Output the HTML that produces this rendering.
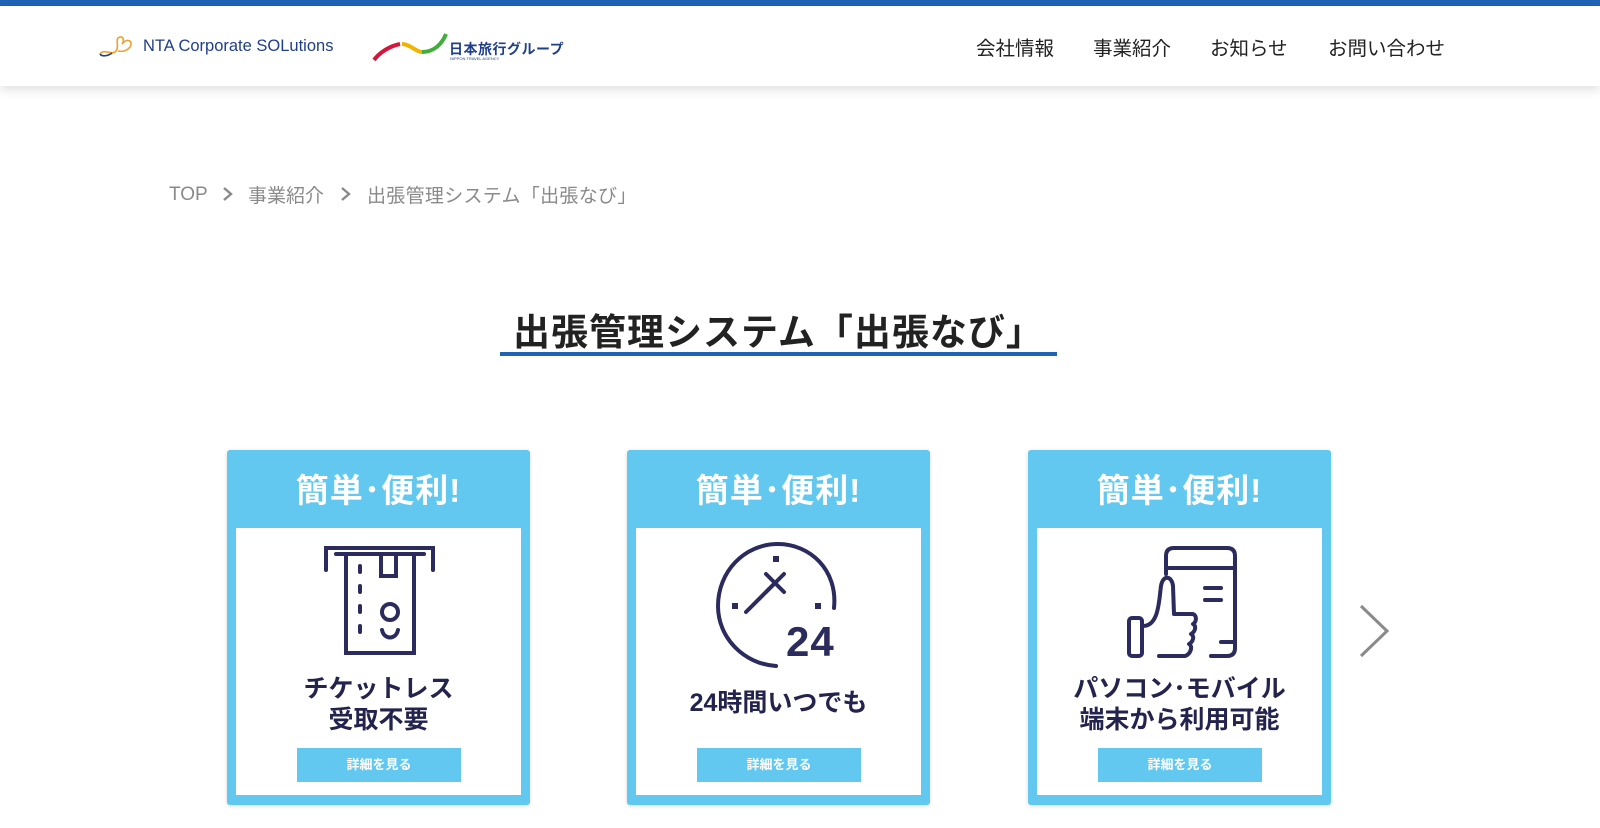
<!DOCTYPE html>
<html><head><meta charset="utf-8">
<style>
*{margin:0;padding:0;box-sizing:border-box}
body{width:1600px;height:828px;overflow:hidden;background:#fff;font-family:"Liberation Sans","Noto Sans CJK JP",sans-serif;position:relative}
.topbar{position:absolute;left:0;top:0;width:1600px;height:6px;background:#1f63b5}
.header{position:absolute;left:0;top:6px;width:1600px;height:80px;background:#fff;box-shadow:0 4px 10px rgba(0,0,0,0.12)}
.nav{position:absolute;top:26px;font-size:19.5px;color:#222;white-space:nowrap}
.bc{position:absolute;top:184px;height:26px;line-height:26px;font-size:19px;color:#8a8a8a;white-space:nowrap}
.title{position:absolute;left:480px;top:302px;width:597px;text-align:center;font-size:37px;font-weight:bold;color:#222;letter-spacing:1px}
.uline{position:absolute;left:500px;top:352px;width:557px;height:4px;background:#1f63b5}
.card{position:absolute;top:450px;width:303px;height:355px;background:#62c8ef;border-radius:3px;box-shadow:0 1px 4px rgba(0,0,0,0.15)}
.card .hd{position:absolute;left:0;top:14px;width:100%;text-align:center;color:#fff;font-size:33px;font-weight:bold;letter-spacing:1px}
.card .in{position:absolute;left:9px;top:78px;width:285px;height:267px;background:#fff}
.card .txt{position:absolute;left:0;width:100%;text-align:center;color:#23234d;font-size:25px;font-weight:bold;line-height:31px}
.card .btn{position:absolute;left:61px;top:220px;width:164px;height:34px;background:#62c8ef;color:#fff;font-size:13px;font-weight:bold;text-align:center;line-height:34px}
.card svg{position:absolute;left:0;top:0}
</style></head><body>
<div class="topbar"></div>
<div class="header">
 <svg style="position:absolute;left:98px;top:28px" width="40" height="24" viewBox="0 0 40 24"><path d="M2 20 C6 14 14 22 18 17 C22 12 16 4 22 3 C26 2 26 8 24 10 C28 4 36 6 32 13 C29 17 24 18 20 17" fill="none" stroke="#f0a030" stroke-width="1.6"/><path d="M2 20 C4 23 10 22 14 19" fill="none" stroke="#1f3f8a" stroke-width="1.6"/></svg>
 <div style="position:absolute;left:143px;top:31px;font-size:16.5px;color:#1f3f8a">NTA Corporate SOLutions</div>
 <svg style="position:absolute;left:372px;top:24px" width="80" height="32" viewBox="0 0 80 32"><path d="M2 30 C8 22 18 16 28 14" fill="none" stroke="#d4163c" stroke-width="4"/><path d="M30 14 C38 14 44 22 50 22" fill="none" stroke="#f2b200" stroke-width="4"/><path d="M50 22 C62 22 70 14 74 4" fill="none" stroke="#3fae3a" stroke-width="4"/></svg>
 <div style="position:absolute;left:449px;top:33px;font-size:14px;color:#1f3f8a;font-weight:bold;letter-spacing:0.5px">日本旅行グループ</div>
 <div style="position:absolute;left:450px;top:50px;font-size:4px;color:#1f3f8a">NIPPON TRAVEL AGENCY</div>
 <div class="nav" style="left:976px">会社情報</div>
 <div class="nav" style="left:1093px">事業紹介</div>
 <div class="nav" style="left:1210px">お知らせ</div>
 <div class="nav" style="left:1328px">お問い合わせ</div>
</div>
<div class="bc" style="left:169px;top:182px">TOP</div>
<svg style="position:absolute;left:222px;top:186px" width="12" height="16" viewBox="0 0 12 16"><path d="M2 2 L9 8 L2 14" fill="none" stroke="#8a8a8a" stroke-width="2.4"/></svg>
<div class="bc" style="left:248px">事業紹介</div>
<svg style="position:absolute;left:340px;top:186px" width="12" height="16" viewBox="0 0 12 16"><path d="M2 2 L9 8 L2 14" fill="none" stroke="#8a8a8a" stroke-width="2.4"/></svg>
<div class="bc" style="left:367px;letter-spacing:0.3px">出張管理システム「出張なび」</div>
<div class="title">出張管理システム「出張なび」</div>
<div class="uline"></div>

<div class="card" style="left:227px">
 <div class="hd">簡単･便利!</div>
 <div class="in">
  <svg width="285" height="267" viewBox="0 0 285 267" fill="none" stroke="#2b2b5e" stroke-width="4" stroke-linecap="round">
   <path d="M90 42 V20 H197 V42"/><path d="M100 26 H188"/><path d="M110 26 V125 H178 V26"/><path d="M145 26 V48 H160 V26"/>
   <path d="M124 38 V44 M124 58 V64 M124 78 V84 M124 98 V104" />
   <circle cx="154" cy="84" r="8"/><path d="M146 102 C148 112 160 112 162 102"/>
  </svg>
  <div class="txt" style="top:146px">チケットレス<br>受取不要</div>
  <div class="btn">詳細を見る</div>
 </div>
</div>

<div class="card" style="left:627px">
 <div class="hd">簡単･便利!</div>
 <div class="in">
  <svg width="285" height="267" viewBox="0 0 285 267" fill="none" stroke="#2b2b5e" stroke-width="4" stroke-linecap="round">
   <path d="M198 80 C202 42 174 16 142 16 C108 16 82 44 82 78 C82 110 108 136 140 138"/>
   <path d="M130 46 L148 64 M148 46 L130 64"/><path d="M139 55 L110 84"/>
   <rect x="139" y="30" width="2" height="2" fill="#2b2b5e"/><rect x="98" y="77" width="2" height="2" fill="#2b2b5e"/><rect x="181" y="77" width="2" height="2" fill="#2b2b5e"/>
  </svg>
  <div style="position:absolute;left:150px;top:90px;font-size:42px;color:#2b2b5e;font-weight:bold;letter-spacing:1px">24</div>
  <div class="txt" style="top:160px">24時間いつでも</div>
  <div class="btn">詳細を見る</div>
 </div>
</div>

<div class="card" style="left:1028px">
 <div class="hd">簡単･便利!</div>
 <div class="in">
  <svg width="285" height="267" viewBox="0 0 285 267" fill="none" stroke="#2b2b5e" stroke-width="4" stroke-linecap="round" stroke-linejoin="round">
   <path d="M129 46 V28 Q129 20 137 20 H190 Q198 20 198 28 V120 Q198 128 190 128 H174"/><path d="M129 40 H198"/>
   <path d="M168 60 H184 M168 72 H184"/><path d="M184 114 H198"/>
   <rect x="92" y="90" width="13" height="38" rx="3"/>
   <path d="M106 98 C122 98 122 72 124 58 C126 46 135 48 136 58 L137 86 H155 C160 86 160 94 156 96 C160 98 158 104 154 106 C158 108 156 114 152 116 C156 118 154 126 148 128 H122"/>
  </svg>
  <div class="txt" style="top:146px">パソコン･モバイル<br>端末から利用可能</div>
  <div class="btn">詳細を見る</div>
 </div>
</div>

<svg style="position:absolute;left:1358px;top:603px" width="32" height="56" viewBox="0 0 32 56"><path d="M3 3 L29 28 L3 53" fill="none" stroke="#8a8a8a" stroke-width="3"/></svg>
</body></html>
